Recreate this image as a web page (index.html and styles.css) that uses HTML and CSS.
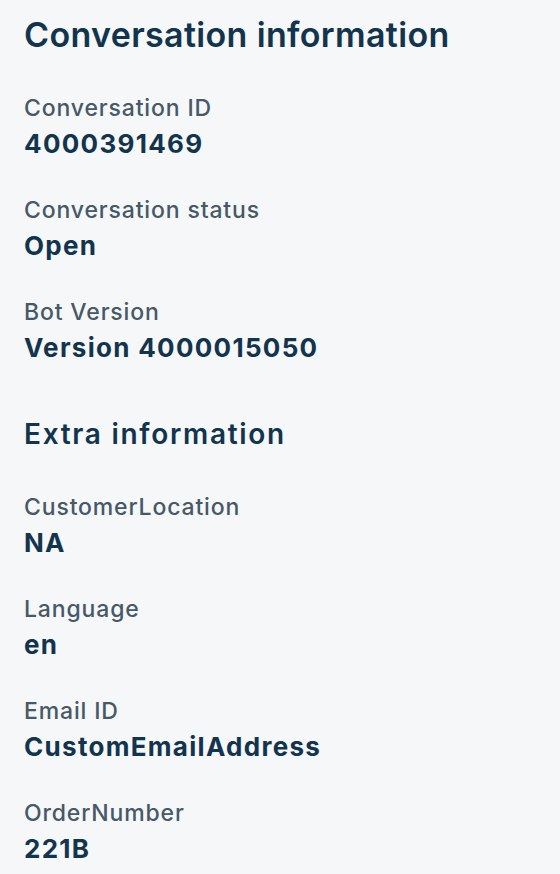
FILE: index.html
```html
<!DOCTYPE html>
<html>
  <head>
    <title>Conversation information</title>
    <link rel="stylesheet" href="styles.css">
  </head>
  <body>
    <div class="panel">

      <h1 class="title">Conversation information</h1>

      <div class="field">
        <div class="label">Conversation ID</div>
        <div class="value">4000391469</div>
      </div>

      <div class="field">
        <div class="label">Conversation status</div>
        <div class="value">Open</div>
      </div>

      <div class="field">
        <div class="label">Bot Version</div>
        <div class="value">Version 4000015050</div>
      </div>

      <h2 class="section">Extra information</h2>

      <div class="field">
        <div class="label">CustomerLocation</div>
        <div class="value">NA</div>
      </div>

      <div class="field">
        <div class="label">Language</div>
        <div class="value">en</div>
      </div>

      <div class="field">
        <div class="label">Email ID</div>
        <div class="value">CustomEmailAddress</div>
      </div>

      <div class="field">
        <div class="label">OrderNumber</div>
        <div class="value">221B</div>
      </div>

    </div>
  </body>
</html>
```

FILE: styles.css
```css
body {
    margin: 0;
    padding: 0;
    background-color: #f5f7f9;
    font-family: Inter, "Noto Sans", sans-serif;
    color: #12344d;
}

.panel {
    padding: 15px 24px 0 24px;
    display: flex;
    flex-direction: column;
}

.title {
    margin: 0 0 39px 0;
    font-size: 34px;
    line-height: 40px;
    font-weight: 600;
    letter-spacing: 0.35px;
}

.section {
    margin: 16px 0 41px 0;
    font-size: 28px;
    line-height: 36px;
    font-weight: 600;
    letter-spacing: 1.7px;
}

.field {
    margin-bottom: 36px;
}

.label {
    font-size: 23px;
    line-height: 28px;
    font-weight: 500;
    letter-spacing: 0.85px;
    color: #475867;
}

.value {
    margin-top: 6px;
    font-size: 26px;
    line-height: 32px;
    font-weight: 700;
    letter-spacing: 1.3px;
}
```
